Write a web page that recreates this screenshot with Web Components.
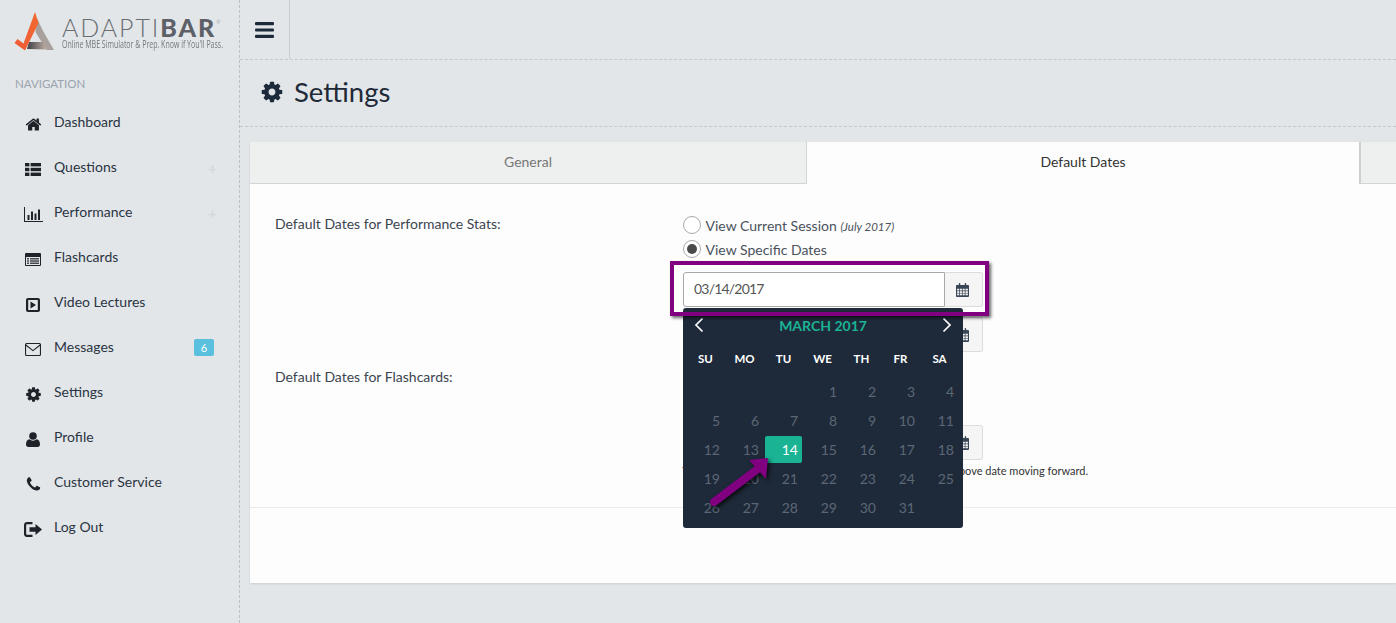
<!DOCTYPE html>
<html lang="en">
<head>
<meta charset="utf-8">
<title>Settings</title>
<style>
  html, body { margin: 0; height: 623px; overflow: hidden; background: #e2e6e9; }
  body { font-family: Lato, "Open Sans", sans-serif; font-size: 14px; color: #333; }
</style>
</head>
<body>
<app-shell>
  <side-nav slot="side">
    <nav-item icon="home">Dashboard</nav-item>
    <nav-item icon="list" plus>Questions</nav-item>
    <nav-item icon="chart" plus>Performance</nav-item>
    <nav-item icon="cards">Flashcards</nav-item>
    <nav-item icon="video">Video Lectures</nav-item>
    <nav-item icon="mail" badge="6">Messages</nav-item>
    <nav-item icon="cog">Settings</nav-item>
    <nav-item icon="user">Profile</nav-item>
    <nav-item icon="phone">Customer Service</nav-item>
    <nav-item icon="logout">Log Out</nav-item>
  </side-nav>
  <top-bar slot="top"></top-bar>
  <page-title slot="title">Settings</page-title>
  <settings-panel slot="panel">
    <form-row label="Default Dates for Performance Stats:">
      <radio-line>View Current Session <i style="font-size:11.5px">(July 2017)</i></radio-line>
      <radio-line checked>View Specific Dates</radio-line>
      <date-field value="03/14/2017" open></date-field>
      <date-field class="second"></date-field>
    </form-row>
    <form-row label="Default Dates for Flashcards:" class="flash">
      <date-field></date-field>
      <hint-text>above date moving forward.</hint-text>
    </form-row>
  </settings-panel>
</app-shell>

<script>
  const FA = (d) => `<svg viewBox="0 0 1792 1792" fill="currentColor"><path d="${d}"/></svg>`;
  const COG = 'M1152 896q0-106-75-181t-181-75-181 75-75 181 75 181 181 75 181-75 75-181zm512-109v222q0 12-8 23t-20 13l-185 28q-19 54-39 91 35 50 107 138 10 12 10 25t-9 23q-27 37-99 108t-94 71q-12 0-26-9l-138-108q-44 23-91 38-16 136-29 186-7 28-36 28h-222q-14 0-24.5-8.5t-11.5-21.5l-28-184q-49-16-90-37l-141 107q-10 9-25 9-14 0-25-11-126-114-165-168-7-10-7-23 0-12 8-23 15-21 51-66.5t54-70.5q-27-50-41-99l-183-27q-13-2-21-12.5t-8-23.5v-222q0-12 8-23t19-13l186-28q14-46 39-92-40-57-107-138-10-12-10-24 0-10 9-23 26-36 98.5-107.5t94.5-71.5q13 0 26 10l138 107q44-23 91-38 16-136 29-186 7-28 36-28h222q14 0 24.5 8.5t11.5 21.5l28 184q49 16 90 37l142-107q9-9 24-9 13 0 25 10 129 119 165 170 7 8 7 22 0 12-8 23-15 21-51 66.5t-54 70.5q26 50 41 98l183 28q13 2 21 12.5t8 23.5z';

  const ICONS = {
    home: FA('M1472 992v480q0 26-19 45t-45 19h-384v-384h-256v384h-384q-26 0-45-19t-19-45v-480q0-1 .5-3t.5-3l575-474 575 474q1 2 1 6zm223-69l-62 74q-8 9-21 11h-3q-13 0-21-7l-692-577-692 577q-12 8-24 7-13-2-21-11l-62-74q-8-10-7-23.5t11-21.5l719-599q32-26 76-26t76 26l244 204v-195q0-14 9-23t23-9h192q14 0 23 9t9 23v408l219 182q10 8 11 21.5t-7 23.5z'),
    list: `<svg viewBox="0 0 16 13" fill="currentColor"><rect width="4.4" height="3.4" x="0" y="0"/><rect width="10.4" height="3.4" x="5.6" y="0"/><rect width="4.4" height="3.4" x="0" y="4.8"/><rect width="10.4" height="3.4" x="5.6" y="4.8"/><rect width="4.4" height="3.4" x="0" y="9.6"/><rect width="10.4" height="3.4" x="5.6" y="9.6"/></svg>`,
    chart: `<svg viewBox="0 0 19 15" fill="currentColor"><path d="M0 0h1v14h18v1H0z"/><rect x="3.5" y="8" width="2" height="5"/><rect x="7" y="4.5" width="2" height="8.5"/><rect x="10.5" y="6.5" width="2" height="6.5"/><rect x="14" y="2.5" width="2" height="10.5"/></svg>`,
    cards: `<svg viewBox="0 0 16 13" fill="currentColor"><path fill-rule="evenodd" d="M1 0h14a1 1 0 0 1 1 1v11a1 1 0 0 1-1 1H1a1 1 0 0 1-1-1V1a1 1 0 0 1 1-1zm0 4v8h14V4z"/><rect x="2" y="5.2" width="2" height="1.2"/><rect x="5" y="5.2" width="9" height="1.2"/><rect x="2" y="7.4" width="2" height="1.2"/><rect x="5" y="7.4" width="9" height="1.2"/><rect x="2" y="9.6" width="2" height="1.2"/><rect x="5" y="9.6" width="9" height="1.2"/></svg>`,
    video: `<svg viewBox="0 0 14 14" fill="currentColor"><path fill-rule="evenodd" d="M2 0h10a2 2 0 0 1 2 2v10a2 2 0 0 1-2 2H2a2 2 0 0 1-2-2V2a2 2 0 0 1 2-2zm.2 2v10h9.600V2z"/><path d="M4.500 3.500v7L10 7z"/></svg>`,
    mail: `<svg viewBox="0 0 16 13" fill="none" stroke="currentColor" stroke-width="1.100"><rect x=".55" y=".55" width="14.900" height="11.900" rx="1"/><path d="M.8 2l7.200 5.600L15.200 2"/></svg>`,
    cog: FA(COG),
    user: `<svg viewBox="0 0 14 15" fill="currentColor"><circle cx="7" cy="4" r="3.800"/><path d="M3.500 7.300C4.500 8.200 5.700 8.700 7 8.700s2.500-.5 3.500-1.400C12.800 7.500 14 9.500 14 12.500c0 1.500-1 2.500-2.400 2.500H2.400C1 15 0 14 0 12.500 0 9.500 1.200 7.500 3.500 7.300z"/></svg>`,
    phone: FA('M1600 1240q0 27-10 70.5t-21 68.5q-21 50-122 106-94 51-186 51-27 0-53-3.5t-57.5-12.5-47-14.5-55.5-20.5-49-18q-98-35-175-83-127-79-264-216t-216-264q-48-77-83-175-3-9-18-49t-20.5-55.5-14.5-47-12.5-57.5-3.5-53q0-92 51-186 56-101 106-122 25-11 68.5-21t70.5-10q14 0 21 3 18 6 53 76 11 19 30 54t35 63.5 31 53.5q3 4 17.5 25t21.5 35.5 7 28.5q0 20-28.5 50t-62 55-62 53-28.5 46q0 9 5 22.5t8.5 20.500 14 24 11.500 19q76 137 174 235t235 174q2 1 19 11.500t24 14 20.500 8.500 22.500 5q18 0 46-28.500t53-62 55-62 50-28.500q14 0 28.500 7t35.500 21.500 25 17.500q25 15 53.500 31t63.500 35 54 30q70 35 76 53 3 7 3 21z'),
    logout: `<svg viewBox="0 0 18 15" fill="currentColor"><path d="M3 0h5.500v2.200H3.200c-.6 0-1 .4-1 1v8.600c0 .6.400 1 1 1h5.300V15H3c-1.700 0-3-1.300-3-3V3c0-1.700 1.300-3 3-3z"/><path d="M5.500 5.300h6V2l6.500 5.500-6.500 5.500V9.700h-6z"/></svg>`
  };

  const CALENDAR = `<svg viewBox="0 0 14 15" fill="currentColor"><path fill-rule="evenodd" d="M1 2h2V.8a.8.8 0 0 1 1.600 0V2h4.800V.8a.8.8 0 0 1 1.600 0V2h2a1 1 0 0 1 1 1v11a1 1 0 0 1-1 1H1a1 1 0 0 1-1-1V3a1 1 0 0 1 1-1zm.2 4.200v1.800h2.200V6.200zm3 0v1.800h2.200V6.200zm3 0v1.800h2.200V6.200zm3 0v1.800h2.600V6.200zm-9 2.600v1.800h2.200V8.800zm3 0v1.800h2.200V8.800zm3 0v1.800h2.200V8.800zm3 0v1.800h2.600V8.800zm-9 2.600v1.800h2.200v-1.800zm3 0v1.800h2.200v-1.800zm3 0v1.800h2.200v-1.800zm3 0v1.800h2.600v-1.800z"/></svg>`;

  class AppShell extends HTMLElement {
    constructor() {
      super();
      this.attachShadow({ mode: 'open' }).innerHTML = `
        <style>
          :host { display: grid; grid-template-columns: 240px 1fr; height: 623px; }
          .main { display: flex; flex-direction: column; min-width: 0; }
          .body { padding: 15px 0 0 10px; }
        </style>
        <slot name="side"></slot>
        <div class="main">
          <slot name="top"></slot>
          <slot name="title"></slot>
          <div class="body"><slot name="panel"></slot></div>
        </div>`;
    }
  }

  class SideNav extends HTMLElement {
    constructor() {
      super();
      this.attachShadow({ mode: 'open' }).innerHTML = `
        <style>
          :host { display: block; box-sizing: border-box; border-right: 1px dashed #b9c0c6; height: 623px; }
          .logo { height: 60px; box-sizing: border-box; display: flex; padding: 11px 0 0 14px; gap: 6px; }
          .logo svg { width: 42px; height: 40px; flex: none; }
          .word { font: 300 25px/21px Lato, sans-serif; color: #6a6e73; letter-spacing: 1.900px; white-space: nowrap; margin-top: 6px; }
          .word b { font-weight: 900; color: #5d6066; letter-spacing: 2px; }
          .word sup { font-size: 5px; vertical-align: 13px; line-height: 0; }
          .tag { font: 400 10px/10px "Open Sans", sans-serif; color: #74787d; white-space: nowrap; transform: scaleX(.7); transform-origin: 0 0; margin-top: 1px; }
          h2 { margin: 0; padding: 17px 0 0 15px; height: 23px; font: 400 11.500px/14px Lato, sans-serif; color: #9ba3ad; text-transform: uppercase; }
        </style>
        <div class="logo">
          <svg viewBox="0 0 42 40">
            <defs>
              <linearGradient id="leg" x1="0" y1="0" x2="1" y2="0"><stop offset="0" stop-color="#3f3f44"/><stop offset="1" stop-color="#c5b2a8"/></linearGradient>
              <linearGradient id="slash" x1="0" y1="1" x2="1" y2="0"><stop offset="0" stop-color="#ef5a3a"/><stop offset="1" stop-color="#f26a2e"/></linearGradient>
            </defs>
            <path d="M22.500 6L29 20l11 19h-7.500L21.500 21z" fill="#a8a09c"/>
            <path d="M15 31h15l3.500 7.500L13 38z" fill="url(#leg)"/>
            <path d="M21 1l3.500 11L11 39.500.5 32l3-4 6 4.500z" fill="url(#slash)"/>
          </svg>
          <div>
            <div class="word">ADAPTI<b>BAR</b><sup>®</sup></div>
            <div class="tag">Online MBE Simulator &amp; Prep. Know if You'll Pass.</div>
          </div>
        </div>
        <h2>Navigation</h2>
        <slot></slot>`;
    }
  }

  class NavItem extends HTMLElement {
    constructor() {
      super();
      this.attachShadow({ mode: 'open' });
    }
    connectedCallback() {
      const badge = this.getAttribute('badge');
      this.shadowRoot.innerHTML = `
        <style>
          :host { display: flex; align-items: center; height: 45px; padding-left: 24px; padding-right: 25px; color: #2a3442; font-size: 14px; }
          .ico { width: 18px; height: 18px; margin-right: 12px; display: flex; align-items: center; justify-content: center; position: relative; top: 2px; color: #1f2329; flex: none; }
          .ico svg { width: 100%; height: 100%; }
          .ico.list svg, .ico.cards svg, .ico.mail svg { width: 16px; height: 13px; }
          .ico.video svg { width: 14px; height: 14px; }
          .ico.user svg { width: 14px; height: 15px; }
          .ico.chart svg { width: 19px; height: 15px; flex: none; }
          .ico.logout svg { width: 18px; height: 15px; flex: none; }
          .ico.home svg { width: 17px; height: 17px; }
          .ico.cog svg, .ico.phone svg { width: 17px; height: 17px; }
          .label { flex: 1; position: relative; top: -1px; }
          .plus { color: #d6d9db; font-size: 16px; font-weight: 700; line-height: 1; margin-right: -3px; }
          .badge { background: #5bc0de; color: #fff; font-size: 11px; line-height: 17px; width: 20px; text-align: center; border-radius: 2px; }
        </style>
        <span class="ico ${this.getAttribute('icon')}">${ICONS[this.getAttribute('icon')]}</span>
        <span class="label"><slot></slot></span>
        ${this.hasAttribute('plus') ? '<span class="plus">+</span>' : ''}
        ${badge ? `<span class="badge">${badge}</span>` : ''}`;
    }
  }

  class TopBar extends HTMLElement {
    constructor() {
      super();
      this.attachShadow({ mode: 'open' }).innerHTML = `
        <style>
          :host { display: block; height: 60px; box-sizing: border-box; border-bottom: 1px dashed #c3c8cd; }
          .btn { width: 50px; height: 59px; box-sizing: border-box; border-right: 1px solid #c9ced2; display: flex; align-items: center; justify-content: center; }
          .btn svg { width: 19px; height: 16px; margin-top: 1px; color: #1d2a3a; }
        </style>
        <div class="btn">
          <svg viewBox="0 0 19 16" fill="currentColor"><rect width="19" height="3.200" rx="1"/><rect y="6.400" width="19" height="3.200" rx="1"/><rect y="12.800" width="19" height="3.200" rx="1"/></svg>
        </div>`;
    }
  }

  class PageTitle extends HTMLElement {
    constructor() {
      super();
      this.attachShadow({ mode: 'open' }).innerHTML = `
        <style>
          :host { display: flex; align-items: center; height: 67px; box-sizing: border-box; border-bottom: 1px dashed #c3c8cd; padding: 0 0 3px 20px; gap: 10px; font-size: 27.500px; color: #1f2a38; }
          svg { width: 24px; height: 24px; margin-top: 1px; color: #1d2a3a; }
        </style>
        ${ICONS.cog}<slot></slot>`;
    }
  }

  class SettingsPanel extends HTMLElement {
    constructor() {
      super();
      this.attachShadow({ mode: 'open' }).innerHTML = `
        <style>
          :host { display: block; height: 441px; background: #fdfdfd; box-shadow: 0 1px 2px rgba(0,0,0,.1); }
          .tabs { display: grid; grid-template-columns: 557px 554px 1fr; height: 42px; color: #777; }
          .tabs div { display: flex; align-items: center; justify-content: center; background: #eeefef; border-bottom: 1px solid #d2d4d5; box-sizing: border-box; padding-bottom: 2px; }
          .tabs .gen { border-right: 1px solid #d2d4d5; }
          .tabs .on { background: #fdfdfd; border-bottom: 0; border-right: 2px solid #cfcfcf; color: #333; padding-bottom: 3px; }
          .body { height: 324px; box-sizing: border-box; padding: 30px 0 0 25px; border-bottom: 1px solid #ebebeb; }
        </style>
        <div class="tabs"><div class="gen">General</div><div class="on">Default Dates</div><div></div></div>
        <div class="body"><slot></slot></div>`;
    }
  }

  class FormRow extends HTMLElement {
    constructor() {
      super();
      this.attachShadow({ mode: 'open' });
    }
    connectedCallback() {
      this.shadowRoot.innerHTML = `
        <style>
          :host { display: grid; grid-template-columns: 408px 405px; color: #3c4450; }
          .label { line-height: 20px; }
          .controls { display: flex; flex-direction: column; }
          :host(.flash) { margin-top: 15px; }
          :host(.flash) .controls { padding-top: 48px; }
        </style>
        <div class="label">${this.getAttribute('label')}</div>
        <div class="controls"><slot></slot></div>`;
    }
  }

  class RadioLine extends HTMLElement {
    constructor() {
      super();
      this.attachShadow({ mode: 'open' });
    }
    connectedCallback() {
      this.shadowRoot.innerHTML = `
        <style>
          :host { display: flex; align-items: center; height: 24px; gap: 4.500px; color: #4a525c; white-space: nowrap; }
          .dot { width: 18px; height: 18px; box-sizing: border-box; border: 1px solid #a9a9a9; border-radius: 50%; background: #fff; display: flex; align-items: center; justify-content: center; position: relative; top: -1px; }
          .dot::after { content: ""; width: 10px; height: 10px; border-radius: 50%; background: ${this.hasAttribute('checked') ? '#4a4a4a' : 'transparent'}; }
          span.txt { position: relative; top: -1px; }
        </style>
        <span class="dot"></span><span class="txt"><slot></slot></span>`;
    }
  }

  class DateField extends HTMLElement {
    constructor() {
      super();
      this.attachShadow({ mode: 'open' });
    }
    connectedCallback() {
      const open = this.hasAttribute('open');
      this.shadowRoot.innerHTML = `
        <style>
          :host { display: flex; position: relative; height: 35px; width: 300px; margin-top: 10px; }
          .box { width: 262px; box-sizing: border-box; background: #fff; border: 1px solid #a8a8a8; border-radius: 3px 0 0 3px; padding-left: 10px; line-height: 31px; color: #555; font-size: 14px; letter-spacing: -.8px; }
          .add { width: 38px; box-sizing: border-box; background: #f5f5f5; border: 1px solid #dcdcdc; border-left: 0; border-radius: 0 3px 3px 0; display: flex; align-items: center; justify-content: center; color: #3a4757; padding-right: 2px; }
          .add svg { width: 13px; height: 14px; }
          .mark { position: absolute; left: -13px; right: -6px; top: -11px; bottom: -9px; border: 4px solid #800080; box-shadow: 2px 2px 3px rgba(0,0,0,.6); z-index: 3; pointer-events: none; }
        </style>
        <div class="box">${this.getAttribute('value') || ''}</div>
        <div class="add">${CALENDAR}</div>
        ${open ? '<date-popup></date-popup><div class="mark"></div>' : ''}`;
    }
  }

  class DatePopup extends HTMLElement {
    constructor() {
      super();
      const heads = ['SU', 'MO', 'TU', 'WE', 'TH', 'FR', 'SA'].map(d => `<span class="dow">${d}</span>`).join('');
      let days = '<span></span><span></span><span></span>';
      for (let d = 1; d <= 31; d++) days += `<span class="day${d === 14 ? ' on' : ''}">${d}</span>`;
      this.attachShadow({ mode: 'open' }).innerHTML = `
        <style>
          :host { display: block; position: absolute; left: 0; top: 36px; width: 280px; height: 220px; box-sizing: border-box; z-index: 2; background: #1e2a3a; border-radius: 3px; padding: 0 4px; }
          :host::before { content: ""; position: absolute; left: -1px; top: 159px; width: 1px; height: 1px; background: #e8873a; }
          .head { display: flex; align-items: center; justify-content: space-between; height: 36px; padding: 0 7px 2px 7px; box-sizing: border-box; color: #1ab394; font-weight: 700; font-size: 14px; }
          .head svg { width: 10px; height: 16px; fill: none; stroke: #fff; stroke-width: 1.700; }
          .grid { display: grid; grid-template-columns: repeat(7, 37px); column-gap: 2px; }
          .dow { height: 34px; line-height: 30px; text-align: center; color: #fff; font-weight: 700; font-size: 11.500px; }
          .day { height: 27px; line-height: 27px; margin-bottom: 2px; text-align: right; padding-right: 4px; color: #5c6775; font-size: 14px; border-radius: 2px; }
          .day.on { background: #1ab394; color: #fff; }
          svg.arrow { position: absolute; left: 20px; top: 140px; width: 80px; height: 70px; overflow: visible; filter: drop-shadow(2px 2px 2px rgba(0,0,0,.75)); }
        </style>
        <div class="head">
          <svg viewBox="0 0 10 16"><path d="M8.500 1.500L2 8l6.500 6.500"/></svg>
          <span>MARCH 2017</span>
          <svg viewBox="0 0 10 16"><path d="M1.500 1.500L8 8l-6.500 6.500"/></svg>
        </div>
        <div class="grid">${heads}${days}</div>
        <svg class="arrow" viewBox="0 0 80 70">
          <path d="M11 54L56 20" stroke="#800080" stroke-width="8" stroke-linecap="round" fill="none"/>
          <path d="M65 10L63 31 46 12z" fill="#800080"/>
        </svg>`;
    }
  }

  class HintText extends HTMLElement {
    constructor() {
      super();
      this.attachShadow({ mode: 'open' }).innerHTML = `
        <style>
          :host { display: flex; justify-content: flex-end; overflow: hidden; box-sizing: border-box; width: 405px; padding-left: 280px; margin-top: 4px; font-size: 11px; line-height: 14px; color: #333; white-space: nowrap; }
        </style>
        <span><slot></slot></span>`;
    }
  }

  customElements.define('app-shell', AppShell);
  customElements.define('side-nav', SideNav);
  customElements.define('nav-item', NavItem);
  customElements.define('top-bar', TopBar);
  customElements.define('page-title', PageTitle);
  customElements.define('settings-panel', SettingsPanel);
  customElements.define('form-row', FormRow);
  customElements.define('radio-line', RadioLine);
  customElements.define('date-field', DateField);
  customElements.define('date-popup', DatePopup);
  customElements.define('hint-text', HintText);
</script>
</body>
</html>
